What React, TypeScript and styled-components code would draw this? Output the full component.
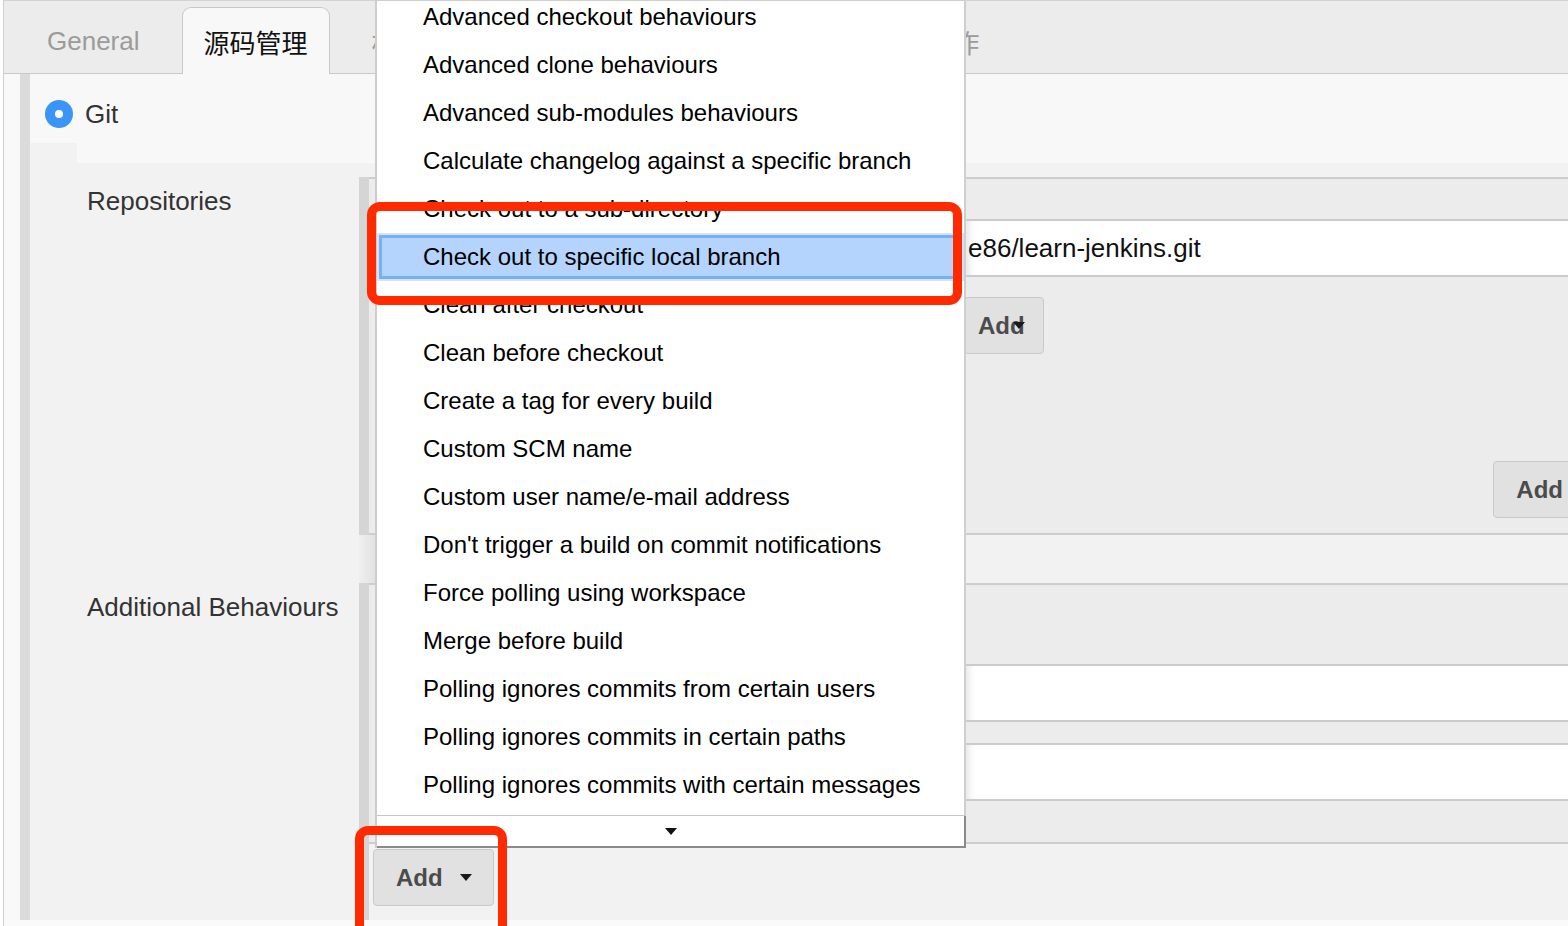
import React from "react";
import styled, { createGlobalStyle } from "styled-components";

const GlobalStyle = createGlobalStyle`
  html, body {
    margin: 0;
    padding: 0;
    background: #ffffff;
    overflow: hidden;
  }
  body {
    width: 1568px;
    height: 926px;
    font-family: "Liberation Sans", "Noto Sans CJK SC", Arial, sans-serif;
  }
`;

const Page = styled.div`
  position: relative;
  box-sizing: border-box;
  width: 1565px;
  height: 926px;
  margin-left: 3px;
  border-left: 1px solid #cfcfcf;
  background: #fafafa;
  overflow: hidden;
`;

/* ---------- Tabs ---------- */
const TabBar = styled.div`
  box-sizing: border-box;
  height: 74px;
  display: flex;
  align-items: flex-end;
  gap: 20px;
  padding-left: 21px;
  background: #ececec;
  border-top: 1px solid #d2d2d2;
  border-bottom: 1px solid #c9c9c9;
`;

const Tab = styled.div<{ $active?: boolean }>`
  box-sizing: border-box;
  height: 67px;
  margin-bottom: -1px;
  padding: 0 21px;
  display: flex;
  align-items: center;
  font-size: 26px;
  white-space: nowrap;
  border: 1px solid ${(p) => (p.$active ? "#c9c9c9" : "transparent")};
  border-bottom: none;
  border-radius: 9px 9px 0 0;
  background: ${(p) => (p.$active ? "#f8f8f8" : "transparent")};
  color: ${(p) => (p.$active ? "#111111" : "#9b9b9b")};
`;

/* ---------- Main form ---------- */
const Main = styled.div`
  display: flex;
  height: 846px;
`;

const Gutter = styled.div`
  width: 16px;
  background: #f9f9f9;
`;

const Strip = styled.div`
  width: 10px;
  background: #dbdbdb;
`;

const Content = styled.div`
  flex: 1;
  display: flex;
  flex-direction: column;
  min-width: 0;
`;

const GitRow = styled.div`
  box-sizing: border-box;
  height: 69px;
  padding: 26px 0 0 15px;
  display: flex;
  align-items: flex-start;
  gap: 12px;
  background: #f8f8f8;
`;

const Radio = styled.span`
  position: relative;
  width: 28px;
  height: 28px;
  border-radius: 50%;
  background: #3a95f7;
  &::after {
    content: "";
    position: absolute;
    left: 10px;
    top: 10px;
    width: 8px;
    height: 8px;
    border-radius: 50%;
    background: #ffffff;
  }
`;

const GitLabel = styled.span`
  font-size: 26px;
  line-height: 28px;
  color: #333333;
`;

const GitTail = styled.div`
  height: 20px;
  display: flex;
  background: #f8f8f8;
`;

const TailBlock = styled.div`
  width: 47px;
  background: #f2f2f2;
`;

const Spacer = styled.div`
  height: 14px;
  background: #f2f2f2;
`;

const Section = styled.div<{ $h: number }>`
  display: grid;
  grid-template-columns: 329px 10px 1fr;
  height: ${(p) => p.$h}px;
  background: #f2f2f2;
`;

const SectionLabel = styled.div`
  padding: 9px 0 0 57px;
  font-size: 26px;
  line-height: 30px;
  color: #333333;
  white-space: nowrap;
`;

const SectionBar = styled.div`
  background: #d5d5d5;
`;

const SectionGap = styled.div`
  display: grid;
  grid-template-columns: 329px 16px 1fr;
  height: 48px;
  background: #f2f2f2;
`;

const GapBar = styled.div`
  background: linear-gradient(to right, #efefef, #e2e2e2);
`;

const Panel = styled.div<{ $pt: number; $pb: number }>`
  box-sizing: border-box;
  display: flex;
  flex-direction: column;
  padding-top: ${(p) => p.$pt}px;
  padding-bottom: ${(p) => p.$pb}px;
  background: #ececec;
  border-top: 2px solid #cdcdcd;
  border-bottom: 2px solid #cdcdcd;
`;

const FieldRow = styled.div<{ $mt?: number }>`
  display: grid;
  grid-template-columns: 597px 1fr;
  margin-top: ${(p) => p.$mt ?? 0}px;
`;

const TextInput = styled.input`
  box-sizing: border-box;
  width: 100%;
  height: 58px;
  margin: 0;
  padding: 0 0 0 2px;
  border: none;
  border-top: 2px solid #cbcbcb;
  border-bottom: 2px solid #cbcbcb;
  outline: none;
  background: #ffffff;
  box-shadow: inset 9px 0 8px -7px rgba(0, 0, 0, 0.12);
  font-family: inherit;
  font-size: 26px;
  color: #111111;
`;

const ButtonCell = styled.div`
  display: flex;
  margin-left: -2px;
`;

const RightButtonRow = styled.div<{ $mt: number }>`
  display: flex;
  justify-content: flex-end;
  margin-top: ${(p) => p.$mt}px;
  margin-right: -46px;
`;

const SectionBody = styled.div`
  display: flex;
  flex-direction: column;
`;

const ButtonRow = styled.div`
  padding: 5px 0 0 4px;
  display: flex;
`;

const AddButton = styled.button<{ $compact?: boolean }>`
  box-sizing: border-box;
  height: 57px;
  display: inline-flex;
  align-items: center;
  gap: ${(p) => (p.$compact ? "0" : "17px")};
  padding: ${(p) => (p.$compact ? "0 18px 0 13px" : "0 21px 0 22px")};
  margin: 0;
  background: #e1e1e1;
  border: 1px solid #c9c9c9;
  border-radius: 4px;
  font-family: inherit;
  font-size: 24px;
  font-weight: bold;
  color: #4b4b4b;
  white-space: nowrap;
`;

const Caret = styled.span<{ $overlap?: boolean }>`
  width: 0;
  height: 0;
  margin-left: ${(p) => (p.$overlap ? "-12px" : "0")};
  border-left: 6px solid transparent;
  border-right: 6px solid transparent;
  border-top: 7px solid #1a1a1a;
`;

/* ---------- Dropdown menu ---------- */
const Menu = styled.div`
  position: absolute;
  left: 371px;
  top: 0;
  width: 591px;
  box-sizing: border-box;
  display: flex;
  flex-direction: column;
  background: #ffffff;
  border-left: 2px solid #cdcdcd;
  border-top: 1px solid #cfcfcf;
  z-index: 5;
`;

const MenuList = styled.ul`
  list-style: none;
  margin: 0;
  padding: 0;
  height: 814px;
  overflow: hidden;
  border-right: 2px solid #cfcfcf;
  border-bottom: 1px solid #c6c6c6;
`;

const MenuTrack = styled.div`
  margin-top: -8px;
`;

const MenuItem = styled.li<{ $selected?: boolean }>`
  box-sizing: border-box;
  height: 48px;
  line-height: 48px;
  padding-left: 46px;
  font-size: 24px;
  color: #000000;
  white-space: nowrap;
  background: ${(p) => (p.$selected ? "#b4d4fd" : "transparent")};
  box-shadow: ${(p) =>
    p.$selected ? "inset 0 0 0 2px #d2e4fc, inset 0 0 0 5px #76b0f7" : "none"};
`;

const MenuFooter = styled.div`
  box-sizing: border-box;
  height: 32px;
  display: flex;
  align-items: center;
  justify-content: center;
  border-right: 2px solid #8a8a8a;
  border-bottom: 2px solid #8a8a8a;
`;

const FooterCaret = styled.span`
  width: 0;
  height: 0;
  border-left: 6px solid transparent;
  border-right: 6px solid transparent;
  border-top: 7px solid #111111;
`;

/* ---------- Annotation boxes ---------- */
const Annotation = styled.div<{ $l: number; $t: number; $w: number; $h: number }>`
  position: absolute;
  left: ${(p) => p.$l}px;
  top: ${(p) => p.$t}px;
  width: ${(p) => p.$w}px;
  height: ${(p) => p.$h}px;
  box-sizing: border-box;
  border: 9px solid #ff2a00;
  border-radius: 13px;
  pointer-events: none;
  z-index: 10;
`;

const tabs = [
  { label: "General" },
  { label: "源码管理", active: true },
  { label: "构建触发器" },
  { label: "构建环境" },
  { label: "构建" },
  { label: "构建后操作" },
];

const menuItems = [
  "Advanced checkout behaviours",
  "Advanced clone behaviours",
  "Advanced sub-modules behaviours",
  "Calculate changelog against a specific branch",
  "Check out to a sub-directory",
  "Check out to specific local branch",
  "Clean after checkout",
  "Clean before checkout",
  "Create a tag for every build",
  "Custom SCM name",
  "Custom user name/e-mail address",
  "Don't trigger a build on commit notifications",
  "Force polling using workspace",
  "Merge before build",
  "Polling ignores commits from certain users",
  "Polling ignores commits in certain paths",
  "Polling ignores commits with certain messages",
];

export default function App() {
  return (
    <>
      <GlobalStyle />
      <Page>
        <TabBar>
          {tabs.map((t) => (
            <Tab key={t.label} $active={t.active}>
              {t.label}
            </Tab>
          ))}
        </TabBar>

        <Main>
          <Gutter />
          <Strip />
          <Content>
            <GitRow>
              <Radio />
              <GitLabel>Git</GitLabel>
            </GitRow>
            <GitTail>
              <TailBlock />
            </GitTail>
            <Spacer />

            <Section $h={358}>
              <SectionLabel>Repositories</SectionLabel>
              <SectionBar />
              <Panel $pt={40} $pb={15}>
                <FieldRow>
                  <div />
                  <TextInput readOnly defaultValue="e86/learn-jenkins.git" />
                </FieldRow>
                <FieldRow $mt={20}>
                  <div />
                  <ButtonCell>
                    <AddButton $compact>
                      Add
                      <Caret $overlap />
                    </AddButton>
                  </ButtonCell>
                </FieldRow>
                <RightButtonRow $mt={107}>
                  <AddButton>
                    Add
                    <Caret />
                  </AddButton>
                </RightButtonRow>
              </Panel>
            </Section>

            <SectionGap>
              <div />
              <GapBar />
              <div />
            </SectionGap>

            <Section $h={337}>
              <SectionLabel>Additional Behaviours</SectionLabel>
              <SectionBar />
              <SectionBody>
                <Panel $pt={79} $pb={41}>
                  <FieldRow>
                    <div />
                    <TextInput readOnly defaultValue="" />
                  </FieldRow>
                  <FieldRow $mt={21}>
                    <div />
                    <TextInput readOnly defaultValue="" />
                  </FieldRow>
                </Panel>
                <ButtonRow>
                  <AddButton>
                    Add
                    <Caret />
                  </AddButton>
                </ButtonRow>
              </SectionBody>
            </Section>
          </Content>
        </Main>

        <Menu>
          <MenuList>
            <MenuTrack>
              {menuItems.map((item) => (
                <MenuItem key={item} $selected={item === "Check out to specific local branch"}>
                  {item}
                </MenuItem>
              ))}
            </MenuTrack>
          </MenuList>
          <MenuFooter>
            <FooterCaret />
          </MenuFooter>
        </Menu>

        <Annotation $l={363} $t={202} $w={595} $h={103} />
        <Annotation $l={351} $t={826} $w={152} $h={120} />
      </Page>
    </>
  );
}
